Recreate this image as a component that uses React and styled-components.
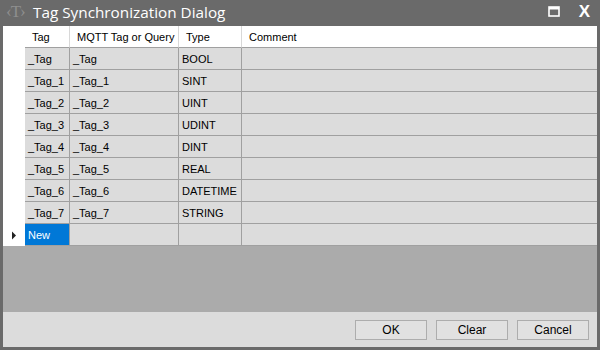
import React from "react";
import styled, { createGlobalStyle } from "styled-components";

const GlobalStyle = createGlobalStyle`
  html, body { margin: 0; padding: 0; }
  body { width: 600px; height: 350px; overflow: hidden; background: #6a6a6a; }
`;

const rows = [
  ["_Tag", "_Tag", "BOOL"],
  ["_Tag_1", "_Tag_1", "SINT"],
  ["_Tag_2", "_Tag_2", "UINT"],
  ["_Tag_3", "_Tag_3", "UDINT"],
  ["_Tag_4", "_Tag_4", "DINT"],
  ["_Tag_5", "_Tag_5", "REAL"],
  ["_Tag_6", "_Tag_6", "DATETIME"],
  ["_Tag_7", "_Tag_7", "STRING"],
];

const columns = [
  { title: "Tag", width: 45 },
  { title: "MQTT Tag or Query", width: 109 },
  { title: "Type", width: 63 },
];

const Window = styled.div`
  width: 600px;
  height: 350px;
  box-sizing: border-box;
  background: #6a6a6a;
  padding: 0 3px 3px 3px;
  display: flex;
  flex-direction: column;
  font-family: "Liberation Sans", Arial, sans-serif;
`;

const TitleBar = styled.div`
  height: 26px;
  flex: none;
  display: flex;
  align-items: center;
  color: #fff;
`;

const AppIcon = styled.span`
  width: 24px;
  margin-left: 3px;
  margin-top: -3px;
  font-family: "Liberation Serif", serif;
  font-size: 17px;
  line-height: 20px;
  color: #8e8e8e;
  letter-spacing: -1px;
`;

const Title = styled.span`
  margin-left: 3px;
  font-family: "Open Sans", sans-serif;
  font-size: 15.3px;
  line-height: 20px;
  margin-top: -3px;
  flex: 1;
`;

const TitleButton = styled.span`
  display: flex;
  align-items: center;
  justify-content: center;
  margin-right: ${(p) => p.gap}px;
  margin-top: -3px;
  font-family: "Liberation Sans", Arial, sans-serif;
  font-weight: bold;
  font-size: 17px;
`;

const GridArea = styled.div`
  flex: 1;
  background: #ababab;
  display: flex;
  flex-direction: column;
`;

const Row = styled.div`
  display: flex;
  flex: none;
  height: 22px;
  background: ${(p) => (p.header ? "#fff" : "#dcdcdc")};
`;

const RowHead = styled.div`
  width: 22px;
  flex: none;
  background: #fff;
  display: flex;
  align-items: center;
  justify-content: center;
`;

const Cell = styled.div`
  box-sizing: border-box;
  width: ${(p) => (p.w ? `${p.w}px` : "auto")};
  flex: ${(p) => (p.w ? "none" : "1")};
  height: 22px;
  border-right: ${(p) => (p.w ? `1px solid ${p.header ? "#d8d8d8" : "#a0a0a0"}` : "none")};
  border-bottom: 1px solid #a0a0a0;
  padding-left: ${(p) => (p.header ? 7 : 3)}px;
  padding-top: 1px;
  font-size: 11px;
  line-height: 21px;
  color: ${(p) => (p.selected ? "#fff" : "#000")};
  background: ${(p) => (p.selected ? "#0078d7" : "transparent")};
  white-space: nowrap;
  overflow: hidden;
`;

const Footer = styled.div`
  height: 35px;
  flex: none;
  background: #dcdcdc;
  display: flex;
  align-items: center;
  justify-content: flex-end;
  gap: 9px;
  padding-right: 8px;
`;

const Button = styled.button`
  width: 72px;
  height: 20px;
  box-sizing: border-box;
  border: 1px solid #adadad;
  background: #e1e1e1;
  font-family: "Liberation Sans", Arial, sans-serif;
  font-size: 12px;
  color: #000;
  padding: 0;
  margin-top: 1px;
`;

const Arrow = () => (
  <svg width="6" height="9" viewBox="0 0 6 9">
    <path d="M1 0.5 L5 4.5 L1 8.5 Z" fill="#222" />
  </svg>
);

export default function App() {
  return (
    <>
      <GlobalStyle />
      <Window>
        <TitleBar>
          <AppIcon>‹T›</AppIcon>
          <Title>Tag Synchronization Dialog</Title>
          <TitleButton gap={19}>
            <svg width="12" height="11" viewBox="0 0 12 11">
              <rect x="1" y="1" width="10" height="9" fill="none" stroke="#fff" strokeWidth="1.6" />
              <rect x="1" y="1" width="10" height="2.5" fill="#fff" />
            </svg>
          </TitleButton>
          <TitleButton gap={7}>X</TitleButton>
        </TitleBar>
        <GridArea>
          <Row header>
            <RowHead />
            {columns.map((c) => (
              <Cell header key={c.title} w={c.width}>
                {c.title}
              </Cell>
            ))}
            <Cell header>Comment</Cell>
          </Row>
          {rows.map((r) => (
            <Row key={r[0]}>
              <RowHead />
              {r.map((v, i) => (
                <Cell key={i} w={columns[i].width}>
                  {v}
                </Cell>
              ))}
              <Cell />
            </Row>
          ))}
          <Row>
            <RowHead>
              <Arrow />
            </RowHead>
            <Cell selected w={columns[0].width}>New</Cell>
            <Cell w={columns[1].width} />
            <Cell w={columns[2].width} />
            <Cell />
          </Row>
        </GridArea>
        <Footer>
          <Button>OK</Button>
          <Button>Clear</Button>
          <Button>Cancel</Button>
        </Footer>
      </Window>
    </>
  );
}
